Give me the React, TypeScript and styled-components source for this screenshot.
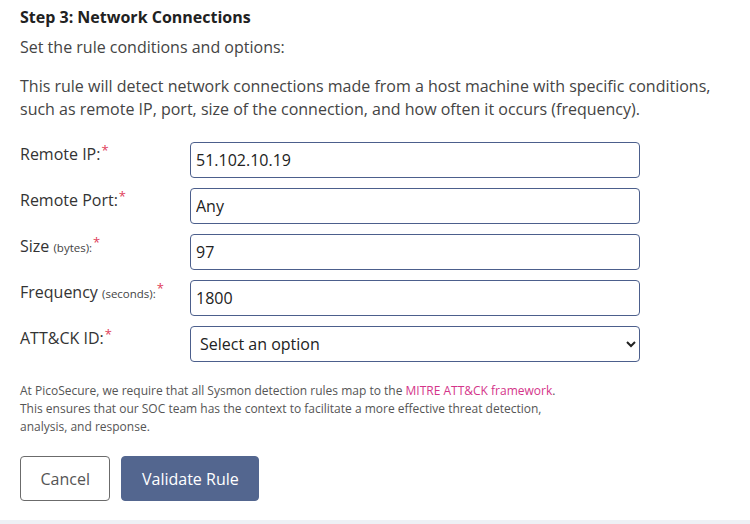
import styled, { createGlobalStyle } from "styled-components"

const GlobalStyle = createGlobalStyle`
  html, body {
    margin: 0;
    padding: 0;
    background: #eef0f5;
  }
  body {
    font-family: "Open Sans", "Noto Sans", sans-serif;
  }
  * {
    box-sizing: border-box;
  }
`

const Card = styled.div`
  background: #fff;
  padding: 5px 20px 19px 20px;
  width: 750px;
`

const Content = styled.div`
  width: 710px;
`

const Title = styled.h3`
  margin: 0;
  font-size: 16px;
  line-height: 24px;
  font-weight: 700;
  color: #212121;
`

const Subtitle = styled.p`
  margin: 6px 0 0 0;
  font-size: 16px;
  line-height: 24px;
  color: #444;
`

const Intro = styled.p`
  margin: 16px 0 0 0;
  font-size: 16px;
  line-height: 23px;
  color: #444;
`

const Form = styled.div`
  margin-top: 21px;
  display: flex;
  flex-direction: column;
  gap: 10px;
`

const Row = styled.div`
  display: grid;
  grid-template-columns: 170px 450px;
  align-items: start;
`

const Label = styled.label`
  font-size: 16px;
  line-height: 24px;
  color: #333;
`

const Unit = styled.span`
  font-size: 11.5px;
  color: #444;
`

const Required = styled.sup`
  color: #e0405a;
  font-size: 13px;
  line-height: 0;
  margin-left: 1px;
  vertical-align: 5px;
`

const TextInput = styled.input`
  height: 36px;
  width: 100%;
  border: 1px solid #4c5f8c;
  border-radius: 4px;
  padding: 0 5px;
  font-family: "Open Sans", "Noto Sans", sans-serif;
  font-size: 16px;
  color: #222;
  background: #fff;
  outline: none;
`

const Select = styled.select`
  height: 36px;
  width: 100%;
  border: 1px solid #4c5f8c;
  border-radius: 4px;
  padding: 0 5px;
  font-family: "Open Sans", "Noto Sans", sans-serif;
  font-size: 16px;
  color: #222;
  background: #fff;
  outline: none;
`

const Note = styled.p`
  margin: 20px 0 0 0;
  max-width: 560px;
  font-size: 12px;
  line-height: 18px;
  color: #555;
`

const NoteLink = styled.a`
  color: #d4358a;
  text-decoration: none;
`

const Actions = styled.div`
  margin-top: 20px;
  display: flex;
  gap: 11px;
`

const Button = styled.button<{ $primary?: boolean }>`
  height: 45px;
  padding: 0 19.5px;
  border-radius: 4px;
  font-family: "Open Sans", "Noto Sans", sans-serif;
  font-size: 16px;
  cursor: pointer;
  border: 1px solid ${(p) => (p.$primary ? "#53668f" : "#6b6b6b")};
  background: ${(p) => (p.$primary ? "#53668f" : "#fff")};
  color: ${(p) => (p.$primary ? "#fff" : "#555")};
`

const fields = [
  { label: "Remote IP:", value: "51.102.10.19" },
  { label: "Remote Port:", value: "Any" },
  { label: "Size", unit: "(bytes)", value: "97" },
  { label: "Frequency", unit: "(seconds)", value: "1800" },
]

export default function App() {
  return (
    <>
      <GlobalStyle />
      <Card>
        <Content>
          <Title>Step 3: Network Connections</Title>
          <Subtitle>Set the rule conditions and options:</Subtitle>
          <Intro>
            This rule will detect network connections made from a host machine with specific conditions, such as
            remote IP, port, size of the connection, and how often it occurs (frequency).
          </Intro>

          <Form>
            {fields.map((f) => (
              <Row key={f.label}>
                <Label>
                  {f.label}
                  {f.unit && (
                    <>
                      {" "}
                      <Unit>{f.unit}:</Unit>
                    </>
                  )}
                  <Required>*</Required>
                </Label>
                <TextInput defaultValue={f.value} />
              </Row>
            ))}
            <Row>
              <Label>
                ATT&amp;CK ID:<Required>*</Required>
              </Label>
              <Select defaultValue="">
                <option value="">Select an option</option>
              </Select>
            </Row>
          </Form>

          <Note>
            At PicoSecure, we require that all Sysmon detection rules map to the{" "}
            <NoteLink href="#">MITRE ATT&amp;CK framework</NoteLink>. This ensures that our SOC team has the context to
            facilitate a more effective threat detection, analysis, and response.
          </Note>

          <Actions>
            <Button>Cancel</Button>
            <Button $primary>Validate Rule</Button>
          </Actions>
        </Content>
      </Card>
    </>
  )
}
